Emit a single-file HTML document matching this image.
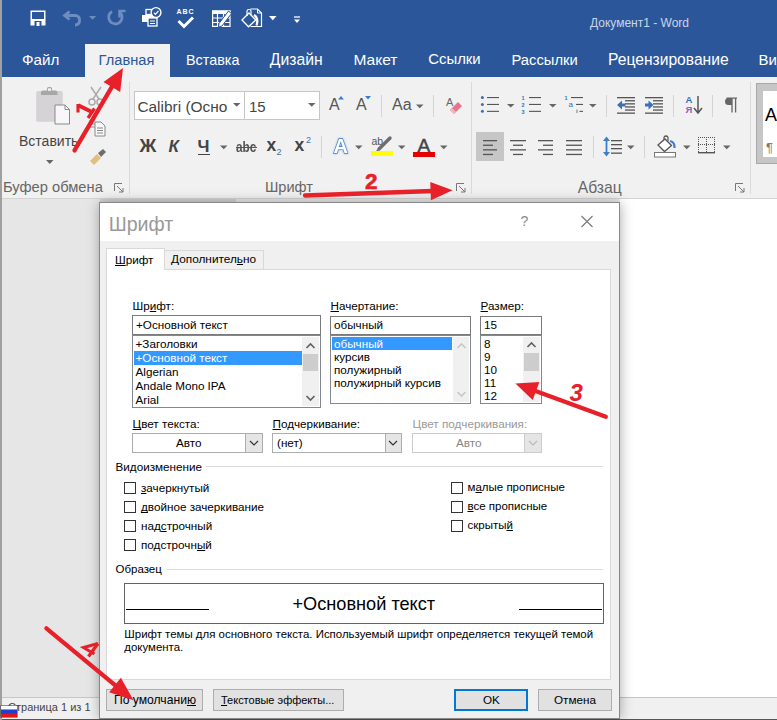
<!DOCTYPE html>
<html><head><meta charset="utf-8"><style>
html,body{margin:0;padding:0;width:777px;height:720px;overflow:hidden;background:#fff}
body{position:relative;font-family:"Liberation Sans",sans-serif}
.t{position:absolute;white-space:nowrap;line-height:1}
.b{position:absolute}
u{text-decoration-skip-ink:none}
</style></head><body>
<div class="b" style="left:0px;top:0px;width:777px;height:77px;background:#2b579a"></div>
<div class="b" style="left:0px;top:77px;width:777px;height:121px;background:#f1f1f1"></div>
<div class="b" style="left:0px;top:198px;width:777px;height:1px;background:#d4d4d4"></div>
<div class="b" style="left:0px;top:199px;width:777px;height:498px;background:#fff"></div>
<div class="b" style="left:0px;top:199px;width:100px;height:498px;background:#e6e6e6"></div>
<div class="b" style="left:100px;top:199px;width:136px;height:4px;background:#d2d2d2"></div>
<div class="b" style="left:236px;top:199px;width:384px;height:4px;background:#e8e8e8"></div>
<div class="b" style="left:0px;top:697px;width:777px;height:1px;background:#c6c6c6"></div>
<div class="b" style="left:0px;top:698px;width:777px;height:21px;background:#f0f0f0"></div>
<div class="b" style="left:0px;top:719px;width:777px;height:1px;background:#555"></div>
<div class="b" style="left:0px;top:0px;width:2px;height:720px;background:#a0a0a0"></div>
<svg style="position:absolute;left:30px;top:10px;" width="16" height="16" viewBox="0 0 16 16"><rect x="0.5" y="0.5" width="15" height="15" fill="#fff"/><rect x="2" y="2" width="12" height="7" fill="#2b579a"/><rect x="4.5" y="11" width="7" height="5" fill="#2b579a"/><rect x="6.5" y="12" width="3" height="4" fill="#fff"/></svg>
<svg style="position:absolute;left:60px;top:6px;" width="40" height="24" viewBox="0 0 40 24"><path d="M9.5 5.5 L4.5 9.5 L9.5 13.5" fill="none" stroke="#6d8cc0" stroke-width="2.8"/><path d="M5 9.5 H15.5 A4.8 4.8 0 0 1 15.5 19 H15" fill="none" stroke="#6d8cc0" stroke-width="2.8"/><path d="M29 10 H36.2 L32.6 13.8 Z" fill="#6d8cc0"/></svg>
<svg style="position:absolute;left:106px;top:7px;" width="22" height="22" viewBox="0 0 22 22"><path d="M6 4.5 A6.7 6.7 0 1 0 13.5 5" fill="none" stroke="#6d8cc0" stroke-width="2.8"/><path d="M13.5 10.5 V4 H19.5" fill="none" stroke="#6d8cc0" stroke-width="2.6"/></svg>
<svg style="position:absolute;left:140px;top:6px;" width="24" height="22" viewBox="0 0 24 22"><rect x="6" y="3.5" width="6" height="5" fill="none" stroke="#fff" stroke-width="1.3"/><path d="M2 9 H15 Q17 9 17 11 V16 H2 Z" fill="#fff"/><rect x="8" y="12" width="9" height="8" fill="#2b579a" stroke="#fff" stroke-width="1.3"/><path d="M10 15 H15 M10 17.5 H15" stroke="#fff" stroke-width="1.1"/><circle cx="16" cy="6.5" r="5.6" fill="#fff"/><circle cx="16" cy="6.5" r="4.2" fill="#2b579a"/><path d="M13.8 6.6 L15.5 8.3 L18.4 5" fill="none" stroke="#fff" stroke-width="1.2"/></svg>
<div class="t " style="left:176.5px;top:7.67px;font-size:7px;color:#fff;font-weight:bold;letter-spacing:0.9px">ABC</div>
<svg style="position:absolute;left:175px;top:15px;" width="22" height="14" viewBox="0 0 22 14"><path d="M3.5 6 L9 11.5 L18 2.5" fill="none" stroke="#fff" stroke-width="3"/></svg>
<svg style="position:absolute;left:210px;top:8px;" width="24" height="22" viewBox="0 0 24 22"><rect x="2.6" y="3" width="17.4" height="15.4" fill="none" stroke="#fff" stroke-width="1.2"/><rect x="2" y="2.5" width="18.5" height="3.5" fill="#fff"/><path d="M2.6 10 H20 M2.6 14.5 H20 M7.5 6 V18.4 M13.5 6 V18.4" stroke="#fff" stroke-width="1.2"/><path d="M9 15.5 L18.5 3 L21.5 5.5 L12 18 L8.5 19 Z" fill="#fff" stroke="#2b579a" stroke-width="1"/></svg>
<svg style="position:absolute;left:240px;top:7px;" width="24" height="22" viewBox="0 0 24 22"><path d="M10.5 2 H17.5 L21.5 6 V19.5 H10.5" fill="none" stroke="#fff" stroke-width="1.2"/><path d="M17.5 2 V6 H21.5" fill="none" stroke="#fff" stroke-width="1"/><path d="M2 13 L9 6 L15.8 13 L8.5 19.8 Z" fill="#2b579a" stroke="#fff" stroke-width="1.3"/><path d="M7 9 V4 Q7 2.5 9 2.5 Q11 2.5 11 4 V8" fill="none" stroke="#fff" stroke-width="1.2"/><path d="M14 8 Q19 11 16.5 18.5" fill="none" stroke="#fff" stroke-width="2.2"/></svg>
<svg style="position:absolute;left:268.5px;top:15.5px;" width="8" height="5" viewBox="0 0 8 5"><path d="M0 0 H7.5 L3.75 4.2 Z" fill="#fff"/></svg>
<svg style="position:absolute;left:293px;top:16px;" width="8" height="8" viewBox="0 0 8 8"><path d="M1 1 H7" stroke="#fff" stroke-width="1.3"/><path d="M1 3.5 H7 L4 7 Z" fill="#fff"/></svg>
<div class="t " style="left:590px;top:16.84px;font-size:12px;color:#c9d5e8;">Документ1 - Word</div>
<div class="b" style="left:85px;top:44px;width:85px;height:33px;background:#f1f1f1"></div>
<div class="t " style="left:22px;top:52.16px;font-size:15.17px;color:#fff;">Файл</div>
<div class="t " style="left:98.6px;top:52.59px;font-size:14.66px;color:#2b579a;">Главная</div>
<div class="t " style="left:186px;top:52.84px;font-size:14.37px;color:#fff;">Вставка</div>
<div class="t " style="left:269.8px;top:51.70px;font-size:15.71px;color:#fff;">Дизайн</div>
<div class="t " style="left:353.4px;top:51.84px;font-size:15.55px;color:#fff;">Макет</div>
<div class="t " style="left:428.3px;top:52.42px;font-size:14.86px;color:#fff;">Ссылки</div>
<div class="t " style="left:511.5px;top:52.51px;font-size:14.75px;color:#fff;">Рассылки</div>
<div class="t " style="left:608.1px;top:51.79px;font-size:15.61px;color:#fff;">Рецензирование</div>
<div class="t " style="left:758.5px;top:52.30px;font-size:15px;color:#fff;">Вид</div>
<svg style="position:absolute;left:34px;top:85px;" width="40" height="42" viewBox="0 0 40 42"><rect x="2.2" y="6" width="26.5" height="30.8" rx="1.5" fill="#d5d3d5"/><path d="M7 10 V7.5 Q7 5.5 9 5.5 H13 V3.5 Q13 2 14.5 2 H16.5 Q18 2 18 3.5 V5.5 H21.5 Q23.5 5.5 23.5 7.5 V10 Z" fill="#a8a6a8"/><rect x="14" y="3.3" width="3" height="2.6" fill="#f1f1f1"/><path d="M21 20 H31 L35.5 24.5 V39 H21 Z" fill="#f8f6f8" stroke="#8a888a" stroke-width="1"/><path d="M31 20 V24.5 H35.5" fill="none" stroke="#8a888a" stroke-width="1"/></svg>
<div class="t " style="left:19px;top:134.15px;font-size:14px;color:#444;">Вставить</div>
<svg style="position:absolute;left:46px;top:160px;" width="8" height="5" viewBox="0 0 8 5"><path d="M0 0 H7.5 L3.75 3.9 Z" fill="#666"/></svg>
<svg style="position:absolute;left:88px;top:86px;" width="16" height="20" viewBox="0 0 16 20"><path d="M3 1 L11 13 M13 1 L5 13" stroke="#aaa" stroke-width="1.5"/><circle cx="4" cy="16" r="3" fill="none" stroke="#aaa" stroke-width="1.5"/><circle cx="12" cy="16" r="3" fill="none" stroke="#aaa" stroke-width="1.5"/></svg>
<svg style="position:absolute;left:87px;top:117px;" width="20" height="20" viewBox="0 0 20 20"><path d="M2 4 H8 M2 7 H8 M2 10 H8" stroke="#999" stroke-width="1"/><path d="M8 5 H14 L18 9 V19 H8 Z" fill="#f8f8f8" stroke="#888" stroke-width="1"/><path d="M10 11 H16 M10 13.5 H16 M10 16 H16" stroke="#888" stroke-width="1"/></svg>
<svg style="position:absolute;left:89px;top:148px;" width="20" height="18" viewBox="0 0 20 18"><path d="M1 13 L8 6 L12 10 L5 17 Z" fill="#e0c080"/><path d="M9 5 L14 1 L17 4 L12 9 Z" fill="#6d6d6d"/></svg>
<div class="t " style="left:3px;top:180.06px;font-size:14.7px;color:#666;">Буфер обмена</div>
<svg style="position:absolute;left:114px;top:183px;" width="10" height="10" viewBox="0 0 10 10"><path d="M0.5 8 V0.5 H8" fill="none" stroke="#777" stroke-width="1"/><path d="M3 3 L9 9 M9 5 V9 H5" fill="none" stroke="#777" stroke-width="1"/></svg>
<div class="b" style="left:129px;top:82px;width:1px;height:112px;background:#dadada"></div>
<div class="b" style="left:134px;top:91px;width:111px;height:29px;background:#fff;border:1px solid #c6c6c6;box-sizing:border-box"></div>
<div class="b" style="left:244px;top:91px;width:76px;height:29px;background:#fff;border:1px solid #c6c6c6;box-sizing:border-box"></div>
<div class="t " style="left:137.4px;top:98.94px;font-size:15.43px;color:#444;">Calibri (Осно</div>
<svg style="position:absolute;left:233px;top:103px;" width="9" height="5" viewBox="0 0 9 5"><path d="M0 0 H7.5 L3.75 3.8 Z" fill="#666"/></svg>
<div class="t " style="left:249px;top:99.30px;font-size:15px;color:#444;">15</div>
<svg style="position:absolute;left:308px;top:103px;" width="9" height="5" viewBox="0 0 9 5"><path d="M0 0 H7.5 L3.75 3.8 Z" fill="#666"/></svg>
<div class="t " style="left:329px;top:97.46px;font-size:16px;color:#555;">A</div>
<svg style="position:absolute;left:338px;top:96px;" width="6" height="4" viewBox="0 0 6 4"><path d="M0 3.5 L3 0 L6 3.5 Z" fill="#3a7ed0"/></svg>
<div class="t " style="left:356px;top:97.46px;font-size:16px;color:#555;">A</div>
<svg style="position:absolute;left:365px;top:96px;" width="6" height="4" viewBox="0 0 6 4"><path d="M0 0 L3 3.5 L6 0 Z" fill="#3a7ed0"/></svg>
<div class="b" style="left:381px;top:95px;width:1px;height:22px;background:#d4d4d4"></div>
<div class="t " style="left:392px;top:97.46px;font-size:16px;color:#555;">Aa</div>
<svg style="position:absolute;left:416px;top:104px;" width="9" height="5" viewBox="0 0 9 5"><path d="M0 0.5 H7.5 L3.75 4.3 Z" fill="#666"/></svg>
<div class="b" style="left:433px;top:95px;width:1px;height:22px;background:#d4d4d4"></div>
<div class="t " style="left:446px;top:96.69px;font-size:11px;color:#666;">A</div>
<svg style="position:absolute;left:448px;top:100px;" width="16" height="15" viewBox="0 0 16 15"><path d="M6 14 L14 6 L10 2 L2 10 Z" fill="#e4758a"/><path d="M2 10 L6 14 L8 12 L4 8 Z" fill="#f2b8c2"/></svg>
<div class="t " style="left:139.5px;top:136.86px;font-size:18.59px;color:#444;font-weight:bold">Ж</div>
<div class="t " style="left:168.5px;top:138.21px;font-size:17px;color:#444;font-weight:bold;font-style:italic">К</div>
<div class="t " style="left:197.5px;top:138.21px;font-size:17px;color:#444;font-weight:bold">Ч</div>
<div class="b" style="left:198px;top:153.5px;width:12px;height:1.5px;background:#444"></div>
<svg style="position:absolute;left:220px;top:145px;" width="9" height="5" viewBox="0 0 9 5"><path d="M0 0.5 H7.5 L3.75 4.3 Z" fill="#666"/></svg>
<div class="t " style="left:236.3px;top:139.65px;font-size:14px;color:#555;transform:scaleX(0.84);transform-origin:0 0;font-weight:bold">abc</div>
<div class="b" style="left:236px;top:147px;width:21px;height:1.2px;background:#555"></div>
<div class="t " style="left:266.5px;top:137.19px;font-size:17.5px;color:#444;font-weight:bold">x</div>
<div class="t " style="left:276.5px;top:147.88px;font-size:9px;color:#3a6fb0;">2</div>
<div class="t " style="left:294.5px;top:137.19px;font-size:17.5px;color:#444;font-weight:bold">x</div>
<div class="t " style="left:306px;top:135.88px;font-size:9px;color:#3a6fb0;">2</div>
<div class="b" style="left:321px;top:136px;width:1px;height:22px;background:#d4d4d4"></div>
<svg style="position:absolute;left:330px;top:134px;filter:drop-shadow(0 0 1px rgba(59,124,208,0.5))" width="24" height="24" viewBox="0 0 24 24"><text x="3.5" y="19" font-family="Liberation Sans" font-weight="bold" font-size="20" fill="#fff" stroke="#3b7cd0" stroke-width="1.3" style="paint-order:stroke">A</text></svg>
<svg style="position:absolute;left:355px;top:145px;" width="9" height="5" viewBox="0 0 9 5"><path d="M0 0.5 H7.5 L3.75 4.3 Z" fill="#666"/></svg>
<div class="t " style="left:371.5px;top:136.11px;font-size:10.5px;color:#555;">ab</div>
<svg style="position:absolute;left:375px;top:135px;" width="18" height="18" viewBox="0 0 18 18"><path d="M4 14 L15 3" stroke="#6d6d6d" stroke-width="3.4" stroke-linecap="round"/><path d="M1.5 16.5 L4 14" stroke="#6d6d6d" stroke-width="1.5"/></svg>
<div class="b" style="left:371px;top:151px;width:22px;height:5px;background:#ffff00"></div>
<svg style="position:absolute;left:398px;top:145px;" width="9" height="5" viewBox="0 0 9 5"><path d="M0 0.5 H7.5 L3.75 4.3 Z" fill="#666"/></svg>
<div class="t " style="left:417.5px;top:135.92px;font-size:19px;color:#444;-webkit-text-stroke:0.5px #444">A</div>
<div class="b" style="left:413px;top:152px;width:22px;height:5px;background:#e60000"></div>
<svg style="position:absolute;left:440px;top:145px;" width="9" height="5" viewBox="0 0 9 5"><path d="M0 0.5 H7.5 L3.75 4.3 Z" fill="#666"/></svg>
<div class="t " style="left:265px;top:180.15px;font-size:14.59px;color:#666;">Шрифт</div>
<svg style="position:absolute;left:456px;top:183px;" width="10" height="10" viewBox="0 0 10 10"><path d="M0.5 8 V0.5 H8" fill="none" stroke="#777" stroke-width="1"/><path d="M3 3 L9 9 M9 5 V9 H5" fill="none" stroke="#777" stroke-width="1"/></svg>
<div class="b" style="left:471px;top:82px;width:1px;height:112px;background:#dadada"></div>
<svg style="position:absolute;left:479px;top:94px;" width="22" height="20" viewBox="0 0 22 20"><circle cx="3.4" cy="3.5" r="1.5" fill="#3a70b8"/><rect x="8" y="3.0" width="12" height="1.1" fill="#555"/><circle cx="3.4" cy="10.4" r="1.5" fill="#3a70b8"/><rect x="8" y="9.9" width="12" height="1.1" fill="#555"/><circle cx="3.4" cy="17.3" r="1.5" fill="#3a70b8"/><rect x="8" y="16.8" width="12" height="1.1" fill="#555"/></svg>
<svg style="position:absolute;left:506.5px;top:104px;" width="8" height="4" viewBox="0 0 8 4"><path d="M0 0 H7.5 L3.75 3.6 Z" fill="#666"/></svg>
<svg style="position:absolute;left:520px;top:94px;" width="22" height="20" viewBox="0 0 22 20"><text x="1.5" y="6.0" font-size="5.5" font-family="Liberation Sans" font-weight="bold" fill="#3a70b8">1</text><rect x="9" y="3.0" width="12" height="1.1" fill="#555"/><text x="1.5" y="12.9" font-size="5.5" font-family="Liberation Sans" font-weight="bold" fill="#3a70b8">2</text><rect x="9" y="9.9" width="12" height="1.1" fill="#555"/><text x="1.5" y="19.8" font-size="5.5" font-family="Liberation Sans" font-weight="bold" fill="#3a70b8">3</text><rect x="9" y="16.8" width="12" height="1.1" fill="#555"/></svg>
<svg style="position:absolute;left:548.5px;top:104px;" width="8" height="4" viewBox="0 0 8 4"><path d="M0 0 H7.5 L3.75 3.6 Z" fill="#666"/></svg>
<svg style="position:absolute;left:563px;top:94px;" width="22" height="20" viewBox="0 0 22 20"><text x="1.5" y="6" font-size="5.5" font-family="Liberation Sans" font-weight="bold" fill="#3a70b8">1</text><rect x="8" y="3" width="12" height="1.1" fill="#555"/><text x="5.5" y="12.5" font-size="8" font-family="Liberation Sans" fill="#3a70b8">a</text><rect x="13" y="9.9" width="7" height="1.1" fill="#555"/><text x="13" y="18.5" font-size="6" font-family="Liberation Sans" font-weight="bold" fill="#3a70b8">i</text><rect x="16.5" y="16.8" width="3.5" height="1.1" fill="#555"/></svg>
<svg style="position:absolute;left:589px;top:104px;" width="8" height="4" viewBox="0 0 8 4"><path d="M0 0 H7.5 L3.75 3.6 Z" fill="#666"/></svg>
<div class="b" style="left:606px;top:95px;width:1px;height:22px;background:#d4d4d4"></div>
<svg style="position:absolute;left:616px;top:96px;" width="20" height="19" viewBox="0 0 20 19"><rect x="1" y="1.0" width="18" height="1.3" fill="#555"/><rect x="9" y="4.1" width="10" height="1.3" fill="#555"/><rect x="9" y="7.2" width="10" height="1.3" fill="#555"/><rect x="9" y="10.3" width="10" height="1.3" fill="#555"/><rect x="9" y="13.4" width="10" height="1.3" fill="#555"/><rect x="1" y="16.5" width="18" height="1.3" fill="#555"/><path d="M1 9 L6 4.5 V7.6 H9.5 V10.4 H6 V13.5 Z" fill="#3a70b8"/></svg>
<svg style="position:absolute;left:644px;top:96px;" width="20" height="19" viewBox="0 0 20 19"><rect x="1" y="1.0" width="18" height="1.3" fill="#555"/><rect x="9" y="4.1" width="10" height="1.3" fill="#555"/><rect x="9" y="7.2" width="10" height="1.3" fill="#555"/><rect x="9" y="10.3" width="10" height="1.3" fill="#555"/><rect x="9" y="13.4" width="10" height="1.3" fill="#555"/><rect x="1" y="16.5" width="18" height="1.3" fill="#555"/><path d="M9.5 9 L4.5 4.5 V7.6 H1 V10.4 H4.5 V13.5 Z" fill="#3a70b8"/></svg>
<div class="b" style="left:673px;top:95px;width:1px;height:22px;background:#d4d4d4"></div>
<div class="t " style="left:685.5px;top:95.46px;font-size:9.5px;color:#3a70b8;font-weight:bold">A</div>
<div class="t " style="left:685.5px;top:104.96px;font-size:9.5px;color:#8e5fb5;font-weight:bold">Я</div>
<svg style="position:absolute;left:693px;top:95px;" width="12" height="20" viewBox="0 0 12 20"><path d="M5 1 V17 M1 13 L5 18 L9 13" stroke="#555" stroke-width="1.5" fill="none"/></svg>
<div class="b" style="left:712px;top:95px;width:1px;height:22px;background:#d4d4d4"></div>
<svg style="position:absolute;left:724px;top:96px;" width="16" height="18" viewBox="0 0 16 18"><path d="M8 2 H4.5 A3.5 3.5 0 0 0 4.5 9 H8 Z" fill="#666"/><path d="M2.5 2.2 H13 M8 2 V16.5 M11.6 2 V16.5" stroke="#666" stroke-width="1.3" fill="none"/></svg>
<div class="b" style="left:476px;top:132px;width:28px;height:29px;background:#c6c6c6"></div>
<svg style="position:absolute;left:483px;top:140px;" width="20" height="18" viewBox="0 0 20 18"><rect x="0" y="0.0" width="14" height="1.3" fill="#555"/><rect x="0" y="4.6" width="10" height="1.3" fill="#555"/><rect x="0" y="9.2" width="14" height="1.3" fill="#555"/><rect x="0" y="13.799999999999999" width="10" height="1.3" fill="#555"/></svg>
<svg style="position:absolute;left:510px;top:140px;" width="20" height="18" viewBox="0 0 20 18"><rect x="0" y="0.0" width="16" height="1.3" fill="#555"/><rect x="3" y="4.6" width="10" height="1.3" fill="#555"/><rect x="0" y="9.2" width="16" height="1.3" fill="#555"/><rect x="3" y="13.799999999999999" width="10" height="1.3" fill="#555"/></svg>
<svg style="position:absolute;left:538px;top:140px;" width="20" height="18" viewBox="0 0 20 18"><rect x="0" y="0.0" width="15" height="1.3" fill="#555"/><rect x="5" y="4.6" width="10" height="1.3" fill="#555"/><rect x="0" y="9.2" width="15" height="1.3" fill="#555"/><rect x="5" y="13.799999999999999" width="10" height="1.3" fill="#555"/></svg>
<svg style="position:absolute;left:566px;top:140px;" width="20" height="18" viewBox="0 0 20 18"><rect x="0" y="0.0" width="16" height="1.3" fill="#555"/><rect x="0" y="4.6" width="16" height="1.3" fill="#555"/><rect x="0" y="9.2" width="16" height="1.3" fill="#555"/><rect x="0" y="13.799999999999999" width="16" height="1.3" fill="#555"/></svg>
<div class="b" style="left:593px;top:136px;width:1px;height:22px;background:#d4d4d4"></div>
<svg style="position:absolute;left:603px;top:135px;" width="20" height="22" viewBox="0 0 20 22"><path d="M3.5 5 V18" stroke="#3a7ed0" stroke-width="1.8"/><path d="M0 6 L3.5 1.5 L7 6 Z M0 17 L3.5 21.5 L7 17 Z" fill="#3a7ed0"/><rect x="8" y="5" width="11" height="1.3" fill="#555"/><rect x="8" y="9" width="11" height="1.3" fill="#555"/><rect x="8" y="13" width="11" height="1.3" fill="#555"/><rect x="8" y="17.5" width="11" height="1.3" fill="#555"/></svg>
<svg style="position:absolute;left:627px;top:145px;" width="9" height="5" viewBox="0 0 9 5"><path d="M0 0.5 H7.5 L3.75 4.3 Z" fill="#666"/></svg>
<div class="b" style="left:644px;top:136px;width:1px;height:22px;background:#d4d4d4"></div>
<svg style="position:absolute;left:653px;top:134px;" width="24" height="24" viewBox="0 0 24 24"><path d="M11 3 V8 M15 3 V7" stroke="#555" stroke-width="1.2"/><path d="M11 3 Q13 1 15 3" fill="none" stroke="#555" stroke-width="1.2"/><path d="M5 11 L12 5 L18.5 11.5 L11.5 17.5 Z" fill="#fff" stroke="#555" stroke-width="1.3"/><path d="M17 7 Q22 8 21.5 14" stroke="#3a7ed0" stroke-width="2.2" fill="none"/><rect x="1.5" y="18.5" width="21" height="4.5" fill="#fff" stroke="#777" stroke-width="1"/></svg>
<svg style="position:absolute;left:683px;top:145px;" width="9" height="5" viewBox="0 0 9 5"><path d="M0 0.5 H7.5 L3.75 4.3 Z" fill="#666"/></svg>
<svg style="position:absolute;left:697px;top:136px;" width="20" height="19" viewBox="0 0 20 19"><rect x="1" y="1" width="1" height="1" fill="#555"/><rect x="3" y="1" width="1" height="1" fill="#555"/><rect x="5" y="1" width="1" height="1" fill="#555"/><rect x="7" y="1" width="1" height="1" fill="#555"/><rect x="9" y="1" width="1" height="1" fill="#555"/><rect x="11" y="1" width="1" height="1" fill="#555"/><rect x="13" y="1" width="1" height="1" fill="#555"/><rect x="15" y="1" width="1" height="1" fill="#555"/><rect x="17" y="1" width="1" height="1" fill="#555"/><rect x="1" y="8" width="1" height="1" fill="#555"/><rect x="3" y="8" width="1" height="1" fill="#555"/><rect x="5" y="8" width="1" height="1" fill="#555"/><rect x="7" y="8" width="1" height="1" fill="#555"/><rect x="9" y="8" width="1" height="1" fill="#555"/><rect x="11" y="8" width="1" height="1" fill="#555"/><rect x="13" y="8" width="1" height="1" fill="#555"/><rect x="15" y="8" width="1" height="1" fill="#555"/><rect x="17" y="8" width="1" height="1" fill="#555"/><rect x="1" y="1" width="1" height="1" fill="#555"/><rect x="1" y="3" width="1" height="1" fill="#555"/><rect x="1" y="5" width="1" height="1" fill="#555"/><rect x="1" y="7" width="1" height="1" fill="#555"/><rect x="1" y="9" width="1" height="1" fill="#555"/><rect x="1" y="11" width="1" height="1" fill="#555"/><rect x="1" y="13" width="1" height="1" fill="#555"/><rect x="1" y="15" width="1" height="1" fill="#555"/><rect x="9" y="1" width="1" height="1" fill="#555"/><rect x="9" y="3" width="1" height="1" fill="#555"/><rect x="9" y="5" width="1" height="1" fill="#555"/><rect x="9" y="7" width="1" height="1" fill="#555"/><rect x="9" y="9" width="1" height="1" fill="#555"/><rect x="9" y="11" width="1" height="1" fill="#555"/><rect x="9" y="13" width="1" height="1" fill="#555"/><rect x="9" y="15" width="1" height="1" fill="#555"/><rect x="17" y="1" width="1" height="1" fill="#555"/><rect x="17" y="3" width="1" height="1" fill="#555"/><rect x="17" y="5" width="1" height="1" fill="#555"/><rect x="17" y="7" width="1" height="1" fill="#555"/><rect x="17" y="9" width="1" height="1" fill="#555"/><rect x="17" y="11" width="1" height="1" fill="#555"/><rect x="17" y="13" width="1" height="1" fill="#555"/><rect x="17" y="15" width="1" height="1" fill="#555"/><rect x="1" y="16" width="17" height="1.4" fill="#555"/></svg>
<svg style="position:absolute;left:723px;top:145px;" width="9" height="5" viewBox="0 0 9 5"><path d="M0 0.5 H7.5 L3.75 4.3 Z" fill="#666"/></svg>
<div class="t " style="left:577.7px;top:179.72px;font-size:15.69px;color:#666;">Абзац</div>
<svg style="position:absolute;left:735px;top:183px;" width="10" height="10" viewBox="0 0 10 10"><path d="M0.5 8 V0.5 H8" fill="none" stroke="#777" stroke-width="1"/><path d="M3 3 L9 9 M9 5 V9 H5" fill="none" stroke="#777" stroke-width="1"/></svg>
<div class="b" style="left:750px;top:82px;width:1px;height:112px;background:#dadada"></div>
<div class="b" style="left:756px;top:83px;width:22px;height:81px;background:#c6c6c6;border:1px solid #a8a8a8;box-sizing:border-box"></div>
<div class="b" style="left:763px;top:91px;width:14px;height:66px;background:#fff"></div>
<div class="t " style="left:765px;top:105.76px;font-size:18px;color:#000;">A</div>
<div class="t " style="left:766px;top:141.00px;font-size:13px;color:#777;">¶</div>
<div class="t " style="left:8px;top:701.86px;font-size:11.03px;color:#444;">Страница 1 из 1</div>
<svg style="position:absolute;left:0px;top:705px;" width="18" height="13" viewBox="0 0 18 13"><rect x="0.5" y="0.5" width="17" height="12" fill="#333"/><rect x="1" y="1" width="16" height="3.7" fill="#fff"/><rect x="1" y="4.7" width="16" height="3.6" fill="#1f3fd0"/><rect x="1" y="8.3" width="16" height="3.7" fill="#e01818"/></svg>
<div class="b" style="left:100px;top:203px;width:520px;height:516px;box-shadow:0 0 12px rgba(0,0,0,0.35)"></div>
<div class="b" style="left:99px;top:202px;width:521px;height:517px;background:#888"></div>
<div class="b" style="left:100px;top:203px;width:519px;height:515px;background:#f0f0f0"></div>
<div class="b" style="left:100px;top:203px;width:519px;height:38px;background:#fff"></div>
<div class="t " style="left:108.75px;top:214.61px;font-size:19.6px;color:#999;">Шрифт</div>
<div class="t " style="left:520.5px;top:214.45px;font-size:14px;color:#8a8a8a;">?</div>
<svg style="position:absolute;left:580px;top:215px;" width="14" height="14" viewBox="0 0 14 14"><path d="M1.5 1 L12.5 12 M12.5 1 L1.5 12" stroke="#777" stroke-width="1.1"/></svg>
<div class="b" style="left:164px;top:250px;width:100px;height:20px;background:#f0f0f0;border:1px solid #d9d9d9;box-sizing:border-box"></div>
<div class="b" style="left:106px;top:269px;width:505px;height:411px;background:#fff;border:1px solid #d9d9d9;box-sizing:border-box"></div>
<div class="b" style="left:106px;top:248px;width:59px;height:22px;background:#fff;border:1px solid #d9d9d9;border-bottom:none;box-sizing:border-box"></div>
<div class="t " style="left:115px;top:254.10px;font-size:11.7px;color:#000;"><u>Ш</u>рифт</div>
<div class="t " style="left:171px;top:253.98px;font-size:11.84px;color:#000;">Дополнител<u>ь</u>но</div>
<div class="t " style="left:132.5px;top:300.10px;font-size:11.7px;color:#000;">Шр<u>и</u>фт:</div>
<div class="t " style="left:330.5px;top:299.60px;font-size:11.7px;color:#000;"><u>Н</u>ачертание:</div>
<div class="t " style="left:480.5px;top:299.60px;font-size:11.7px;color:#000;"><u>Р</u>азмер:</div>
<div class="b" style="left:132px;top:315px;width:189px;height:20px;background:#fff;border:1px solid #7a7a7a;box-sizing:border-box"></div>
<div class="t " style="left:136px;top:319.10px;font-size:11.7px;color:#000;">+Основной текст</div>
<div class="b" style="left:330px;top:316px;width:141px;height:19px;background:#fff;border:1px solid #7a7a7a;box-sizing:border-box"></div>
<div class="t " style="left:334px;top:319.10px;font-size:11.7px;color:#000;">обычный</div>
<div class="b" style="left:480px;top:316px;width:62px;height:19px;background:#fff;border:1px solid #7a7a7a;box-sizing:border-box"></div>
<div class="t " style="left:484px;top:319.10px;font-size:11.7px;color:#000;">15</div>
<div class="b" style="left:132px;top:335px;width:189px;height:73px;background:#fff;border:1px solid #828790;box-sizing:border-box"></div>
<div class="b" style="left:134px;top:351px;width:168px;height:14px;background:#3399ff"></div>
<div class="t " style="left:135.5px;top:337.60px;font-size:11.7px;color:#000;">+Заголовки</div>
<div class="t " style="left:135.5px;top:351.60px;font-size:11.7px;color:#fff;">+Основной текст</div>
<div class="t " style="left:135.5px;top:365.60px;font-size:11.7px;color:#000;">Algerian</div>
<div class="t " style="left:135.5px;top:379.60px;font-size:11.7px;color:#000;">Andale Mono IPA</div>
<div class="t " style="left:135.5px;top:393.60px;font-size:11.7px;color:#000;">Arial</div>
<div class="b" style="left:302px;top:337px;width:17px;height:69px;background:#f0f0f0"></div>
<div class="b" style="left:303px;top:354px;width:15px;height:17px;background:#cdcdcd"></div>
<svg style="position:absolute;left:305px;top:342px;" width="11" height="7" viewBox="0 0 11 7"><path d="M1.5 6 L5.5 2 L9.5 6" stroke="#606060" stroke-width="1.6" fill="none"/></svg>
<svg style="position:absolute;left:305px;top:395px;" width="11" height="7" viewBox="0 0 11 7"><path d="M1.5 1 L5.5 5 L9.5 1" stroke="#606060" stroke-width="1.6" fill="none"/></svg>
<div class="b" style="left:330px;top:335px;width:141px;height:69px;background:#fff;border:1px solid #828790;box-sizing:border-box"></div>
<div class="b" style="left:332px;top:337px;width:120px;height:13px;background:#3399ff"></div>
<div class="t " style="left:334px;top:337.60px;font-size:11.7px;color:#fff;">обычный</div>
<div class="t " style="left:334px;top:350.60px;font-size:11.7px;color:#000;">курсив</div>
<div class="t " style="left:334px;top:363.60px;font-size:11.7px;color:#000;">полужирный</div>
<div class="t " style="left:334px;top:376.60px;font-size:11.7px;color:#000;">полужирный курсив</div>
<div class="b" style="left:453px;top:337px;width:16px;height:65px;background:#f0f0f0"></div>
<svg style="position:absolute;left:456px;top:342px;" width="11" height="7" viewBox="0 0 11 7"><path d="M1.5 6 L5.5 2 L9.5 6" stroke="#c8c8c8" stroke-width="1.6" fill="none"/></svg>
<svg style="position:absolute;left:456px;top:391px;" width="11" height="7" viewBox="0 0 11 7"><path d="M1.5 1 L5.5 5 L9.5 1" stroke="#c8c8c8" stroke-width="1.6" fill="none"/></svg>
<div class="b" style="left:480px;top:335px;width:62px;height:69px;background:#fff;border:1px solid #828790;box-sizing:border-box"></div>
<div class="t " style="left:484px;top:338.10px;font-size:11.7px;color:#000;">8</div>
<div class="t " style="left:484px;top:351.10px;font-size:11.7px;color:#000;">9</div>
<div class="t " style="left:484px;top:364.10px;font-size:11.7px;color:#000;">10</div>
<div class="t " style="left:484px;top:377.10px;font-size:11.7px;color:#000;">11</div>
<div class="t " style="left:484px;top:390.10px;font-size:11.7px;color:#000;">12</div>
<div class="b" style="left:523px;top:337px;width:17px;height:65px;background:#f0f0f0"></div>
<div class="b" style="left:524px;top:353px;width:15px;height:18px;background:#cdcdcd"></div>
<svg style="position:absolute;left:526px;top:341px;" width="11" height="7" viewBox="0 0 11 7"><path d="M1.5 6 L5.5 2 L9.5 6" stroke="#606060" stroke-width="1.6" fill="none"/></svg>
<div class="t " style="left:132.5px;top:418.10px;font-size:11.7px;color:#000;"><u>Ц</u>вет текста:</div>
<div class="t " style="left:272.5px;top:418.10px;font-size:11.7px;color:#000;"><u>П</u>одчеркивание:</div>
<div class="t " style="left:412.5px;top:418.10px;font-size:11.7px;color:#999;">Цвет подчеркивания:</div>
<div class="b" style="left:132px;top:433px;width:131px;height:20px;background:#fff;border:1px solid #adadad;box-sizing:border-box"></div>
<div class="b" style="left:245px;top:433px;width:18px;height:20px;background:#e5e5e5;border:1px solid #adadad;box-sizing:border-box"></div>
<div class="t " style="left:176px;top:437.10px;font-size:11.7px;color:#000;">Авто</div>
<svg style="position:absolute;left:249px;top:440px;" width="10" height="6" viewBox="0 0 10 6"><path d="M1 1 L5 5 L9 1" stroke="#333" stroke-width="1.2" fill="none"/></svg>
<div class="b" style="left:272px;top:433px;width:130px;height:20px;background:#fff;border:1px solid #adadad;box-sizing:border-box"></div>
<div class="b" style="left:385px;top:433px;width:17px;height:20px;background:#e5e5e5;border:1px solid #adadad;box-sizing:border-box"></div>
<div class="t " style="left:277px;top:437.10px;font-size:11.7px;color:#000;">(нет)</div>
<svg style="position:absolute;left:388px;top:440px;" width="10" height="6" viewBox="0 0 10 6"><path d="M1 1 L5 5 L9 1" stroke="#333" stroke-width="1.2" fill="none"/></svg>
<div class="b" style="left:412px;top:433px;width:130px;height:20px;background:#fff;border:1px solid #cccccc;box-sizing:border-box"></div>
<div class="b" style="left:524px;top:433px;width:18px;height:20px;background:#e5e5e5;border:1px solid #cccccc;box-sizing:border-box"></div>
<div class="t " style="left:456px;top:437.10px;font-size:11.7px;color:#888;">Авто</div>
<svg style="position:absolute;left:528px;top:440px;" width="10" height="6" viewBox="0 0 10 6"><path d="M1 1 L5 5 L9 1" stroke="#bbb" stroke-width="1.2" fill="none"/></svg>
<div class="t " style="left:115.5px;top:461.10px;font-size:11.7px;color:#000;">Видоизменение</div>
<div class="b" style="left:206px;top:466px;width:397px;height:1px;background:#dcdcdc"></div>
<div class="b" style="left:124px;top:482px;width:12px;height:12px;background:#fff;border:1px solid #333;box-sizing:border-box"></div>
<div class="t " style="left:141px;top:482.10px;font-size:11.7px;color:#000;"><u>з</u>ачеркнутый</div>
<div class="b" style="left:124px;top:501px;width:12px;height:12px;background:#fff;border:1px solid #333;box-sizing:border-box"></div>
<div class="t " style="left:141px;top:501.10px;font-size:11.7px;color:#000;"><u>д</u>войное зачеркивание</div>
<div class="b" style="left:124px;top:520px;width:12px;height:12px;background:#fff;border:1px solid #333;box-sizing:border-box"></div>
<div class="t " style="left:141px;top:520.10px;font-size:11.7px;color:#000;">над<u>с</u>трочный</div>
<div class="b" style="left:124px;top:539px;width:12px;height:12px;background:#fff;border:1px solid #333;box-sizing:border-box"></div>
<div class="t " style="left:141px;top:539.10px;font-size:11.7px;color:#000;">подстрочн<u>ы</u>й</div>
<div class="b" style="left:451px;top:482px;width:12px;height:12px;background:#fff;border:1px solid #333;box-sizing:border-box"></div>
<div class="t " style="left:467.5px;top:482.27px;font-size:11.5px;color:#000;">м<u>а</u>лые прописные</div>
<div class="b" style="left:451px;top:501px;width:12px;height:12px;background:#fff;border:1px solid #333;box-sizing:border-box"></div>
<div class="t " style="left:467.5px;top:501.27px;font-size:11.5px;color:#000;"><u>в</u>се прописные</div>
<div class="b" style="left:451px;top:520px;width:12px;height:12px;background:#fff;border:1px solid #333;box-sizing:border-box"></div>
<div class="t " style="left:467.5px;top:520.27px;font-size:11.5px;color:#000;">скрыты<u>й</u></div>
<div class="t " style="left:115.5px;top:564.27px;font-size:11.5px;color:#000;">Образец</div>
<div class="b" style="left:167px;top:569px;width:436px;height:1px;background:#dcdcdc"></div>
<div class="b" style="left:124px;top:583px;width:480px;height:41px;background:#fff;border:1px solid #646464;box-sizing:border-box"></div>
<div class="b" style="left:126px;top:609px;width:83px;height:1px;background:#000"></div>
<div class="b" style="left:519px;top:609px;width:83px;height:1px;background:#000"></div>
<div class="t " style="left:292.5px;top:594.63px;font-size:18.16px;color:#000;">+Основной текст</div>
<div class="t " style="left:124.3px;top:629.01px;font-size:11.45px;color:#000;">Шрифт темы для основного текста. Используемый шрифт определяется текущей темой</div>
<div class="t " style="left:124.3px;top:641.51px;font-size:11.45px;color:#000;">документа.</div>
<div class="b" style="left:106px;top:689px;width:97px;height:22px;background:#e1e1e1;border:1px solid #adadad;box-sizing:border-box"></div>
<div class="t " style="left:114px;top:693.73px;font-size:12.13px;color:#000;">По умолчани<u>ю</u></div>
<div class="b" style="left:213px;top:689px;width:131px;height:22px;background:#e1e1e1;border:1px solid #adadad;box-sizing:border-box"></div>
<div class="t " style="left:221px;top:694.70px;font-size:10.99px;color:#000;"><u>Т</u>екстовые эффекты...</div>
<div class="b" style="left:454px;top:689px;width:74px;height:22px;background:#e1e1e1;border:2px solid #0078d7;box-sizing:border-box"></div>
<div class="t " style="left:483px;top:694.10px;font-size:11.7px;color:#000;">OK</div>
<div class="b" style="left:538px;top:689px;width:74px;height:22px;background:#e1e1e1;border:1px solid #adadad;box-sizing:border-box"></div>
<div class="t " style="left:554px;top:694.10px;font-size:11.7px;color:#000;">Отмена</div>
<svg style="position:absolute;left:0px;top:0px;pointer-events:none" width="777" height="720" viewBox="0 0 777 720"><line x1="74.5" y1="150.4" x2="112.9" y2="85.2" stroke="#e8202a" stroke-width="4.3" stroke-linecap="round"/><path d="M123 68 L120.2 91.9 L103.5 82.0 Z" fill="#e8202a"/><line x1="305" y1="195.5" x2="432.6" y2="191.0" stroke="#e8202a" stroke-width="4.3" stroke-linecap="round"/><path d="M452.6 190.3 L430.9 200.3 L430.3 181.9 Z" fill="#e8202a"/><line x1="605.8" y1="416.7" x2="534.2" y2="390.4" stroke="#e8202a" stroke-width="4.3" stroke-linecap="round"/><path d="M515.4 383.5 L539.4 382.1 L532.7 400.1 Z" fill="#e8202a"/><line x1="46.4" y1="628.4" x2="116.5" y2="686.3" stroke="#e8202a" stroke-width="4.3" stroke-linecap="round"/><path d="M133.5 700.3 L109.1 692.2 L120.9 677.8 Z" fill="#e8202a"/><text x="365" y="189.3" font-family="Liberation Sans" font-weight="bold" font-size="22.5" fill="#e8202a" stroke="#e8202a" stroke-width="0.6">2</text><text x="569.5" y="400.8" font-family="Liberation Sans" font-weight="bold" font-style="italic" font-size="24" fill="#e8202a">3</text><path d="M98 643.5 L83.5 647.5 L94.5 654" fill="none" stroke="#e8202a" stroke-width="3" stroke-linejoin="miter"/><path d="M98 643.5 L88.5 656.5" stroke="#e8202a" stroke-width="3.2"/><path d="M78.2 105.3 L92.5 112.3" stroke="#e8202a" stroke-width="4"/><path d="M78 104 L78 112.5" stroke="#e8202a" stroke-width="3.2"/><path d="M94.5 108.5 L88 118" stroke="#e8202a" stroke-width="3.2"/></svg>
</body></html>
